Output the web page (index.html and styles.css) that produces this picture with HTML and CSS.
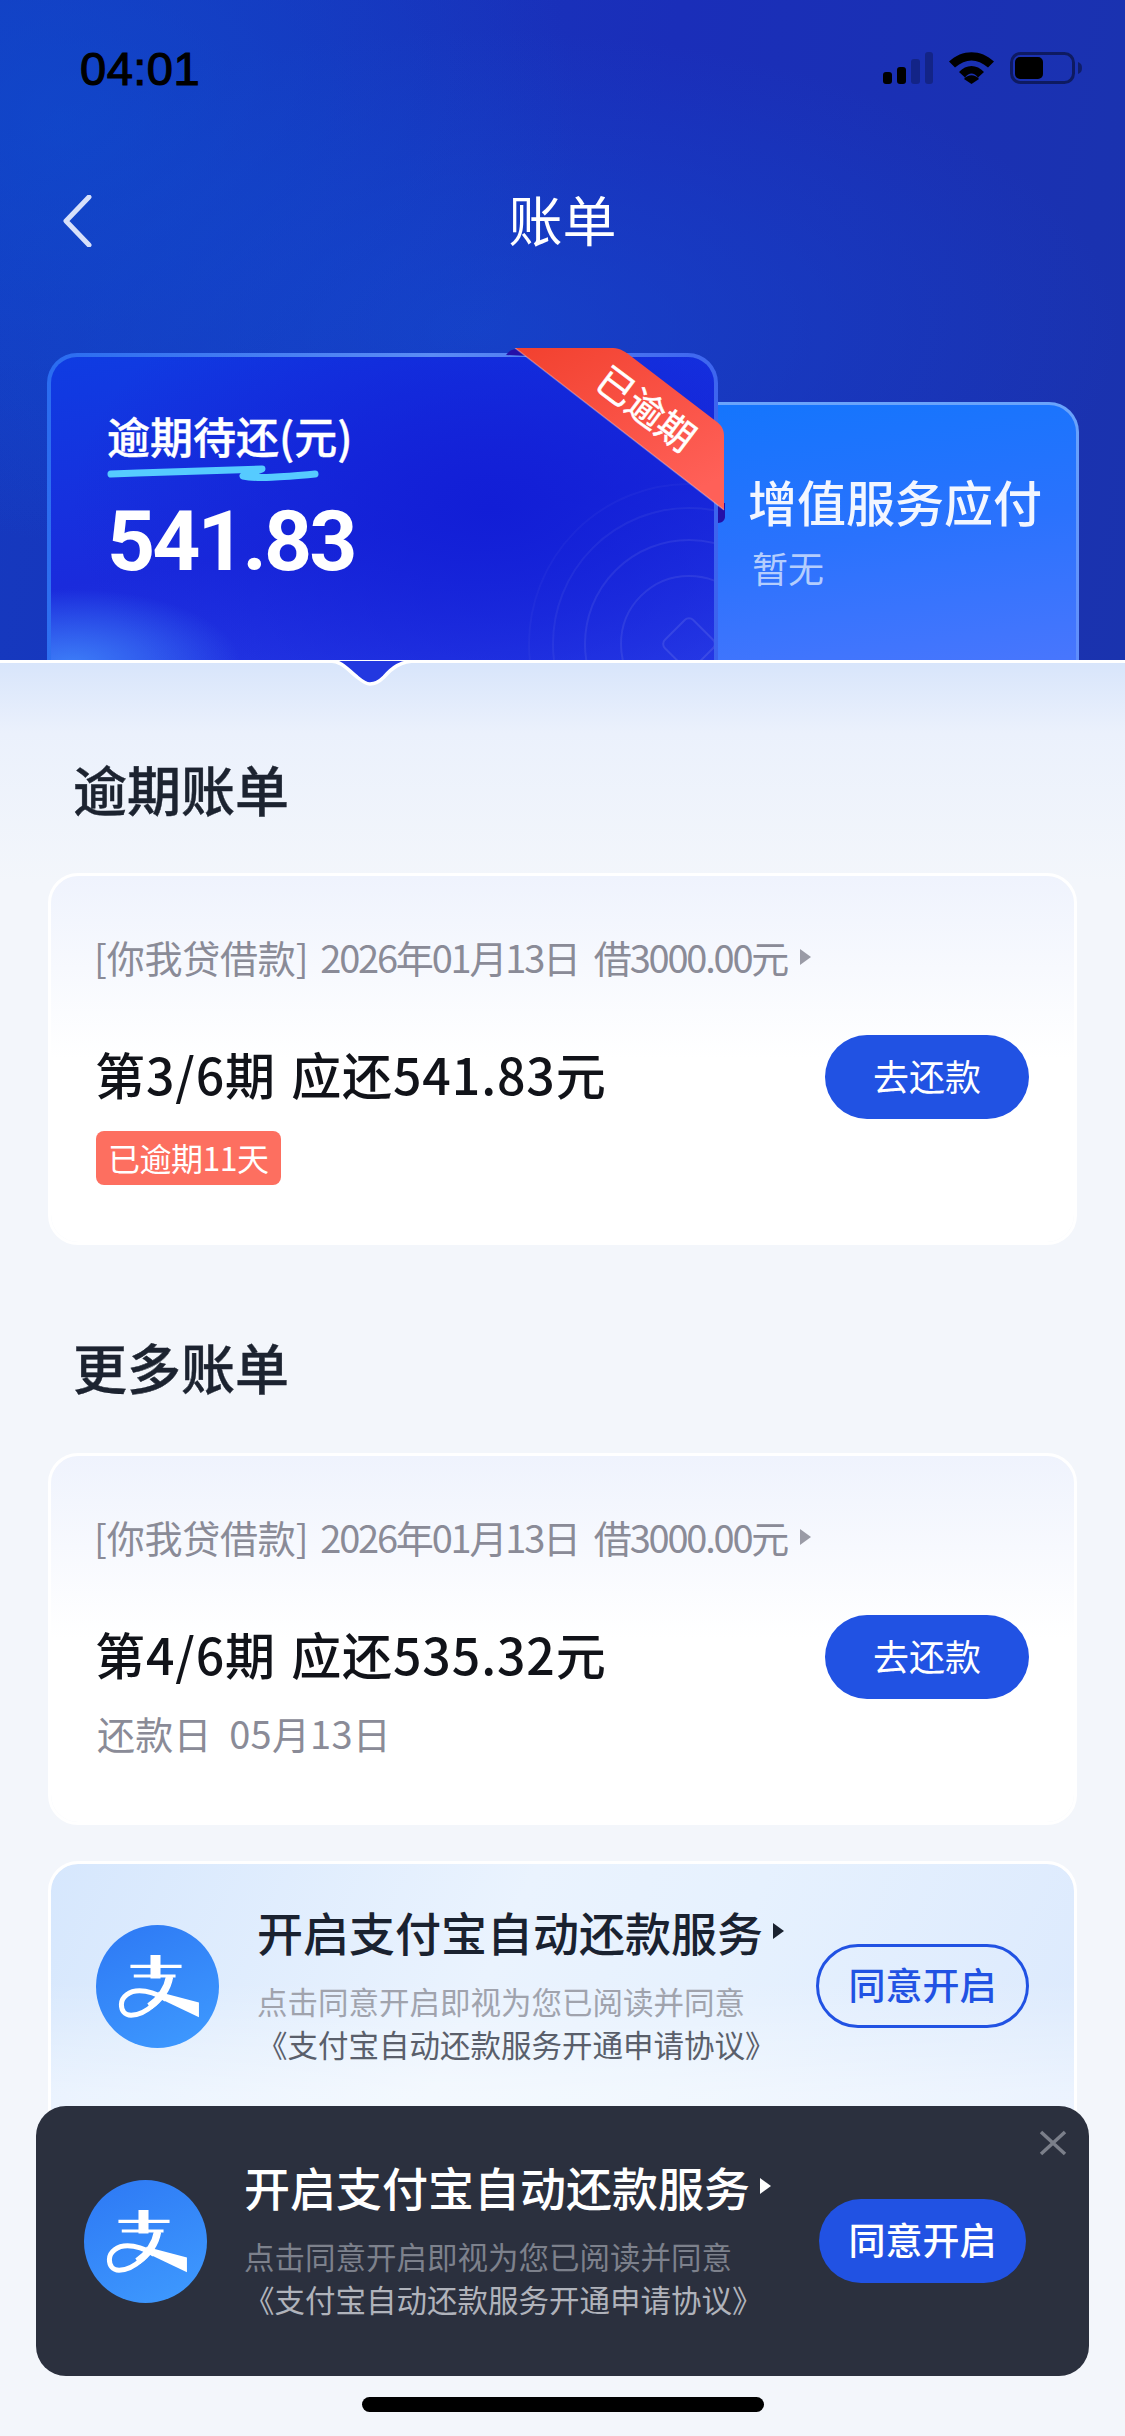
FILE: index.html
```html
<!DOCTYPE html>
<html lang="zh-CN">
<head>
  <meta charset="UTF-8" />
  <meta name="viewport" content="width=device-width, initial-scale=1" />
  <title>账单</title>
  <link rel="stylesheet" href="styles.css">
</head>
<body>

<svg class="defs" width="0" height="0" aria-hidden="true">
  <symbol id="alipay" viewBox="0 0 368 368">
    <path fill="#fff" d="M163 90h30v29h63v10h-63v19h45v9h-45v3h-30v-3h-50v-9h50v-19h-60v-10h60z"/>
    <path fill="none" stroke="#fff" stroke-width="15" d="M222 155C210 215 150 270 105 270C85 270 76 255 76 238C76 215 100 197 130 197C160 197 185 208 210 222"/>
    <path fill="none" stroke="#fff" stroke-width="22" d="M220 155C214 190 190 222 160 244"/>
    <path fill="#fff" d="M186 200L308 232V276L192 221z"/>
  </symbol>
</svg>

<header class="hero">
  <div class="status-bar">
    <span class="time">04:01</span>
    <div class="status-icons">
      <svg width="50" height="32" viewBox="0 0 50 32">
        <rect x="0" y="20" width="9" height="12" rx="3" fill="#000"/>
        <rect x="14" y="15" width="9" height="17" rx="3" fill="#000"/>
        <rect x="28" y="7" width="9" height="25" rx="3" fill="#000" opacity=".25"/>
        <rect x="42" y="0" width="8" height="32" rx="3" fill="#000" opacity=".25"/>
      </svg>
      <svg width="45" height="32" viewBox="0 0 45 32">
        <path d="M0 9.500C13-3 32-3 45 9.500l-6 6C28 6 17 6 6 15.500z" fill="#000"/>
        <path d="M10 20C17 12 28 12 35 20l-6 5.500C25 20 20 20 16 25.500z" fill="#000"/>
        <path d="M15 27C19 22 26 22 30 27l-7.500 5z" fill="#000"/>
      </svg>
      <svg width="72" height="32" viewBox="0 0 72 32">
        <rect x="1.500" y="1.500" width="62" height="29" rx="9" fill="none" stroke="#000" stroke-opacity=".45" stroke-width="3"/>
        <rect x="5" y="5" width="28" height="22" rx="5" fill="#000"/>
        <path d="M68 10c3 1 4 3 4 6s-1 5-4 6z" fill="#000" opacity=".4"/>
      </svg>
    </div>
  </div>

  <nav class="nav-bar">
    <svg class="back" width="30" height="52" viewBox="0 0 30 52">
      <path d="M27 2L4 26l23 24" fill="none" stroke="#d7e0fa" stroke-width="5" stroke-linecap="round" stroke-linejoin="round"/>
    </svg>
    <h1>账单</h1>
  </nav>

  <div class="hero-cards">
    <div class="due-card">
      <svg class="rings" width="330" height="200" viewBox="0 0 330 200">
        <g fill="none" stroke="#fff" stroke-opacity=".05" stroke-width="2">
          <circle cx="305" cy="184" r="68" stroke-opacity=".08"/>
          <circle cx="305" cy="184" r="104" stroke-opacity=".07"/>
          <circle cx="305" cy="184" r="136"/>
          <circle cx="305" cy="184" r="160" stroke-opacity=".03"/>
          <rect x="285" y="164" width="40" height="40" rx="6" transform="rotate(45 305 184)" stroke-opacity=".1"/>
        </g>
      </svg>
      <div class="due-label">逾期待还(元)</div>
      <svg class="squiggle" width="212" height="18" viewBox="0 0 212 18">
        <path d="M4 9C50 7 90 6 155 4L136 11C150 14 175 12 208 9" fill="none" stroke="#56cbff" stroke-width="7" stroke-linecap="round" stroke-linejoin="round"/>
      </svg>
      <div class="due-amount">541.83</div>
    </div>
    <div class="service-card">
      <div class="service-title">增值服务应付</div>
      <div class="service-sub">暂无</div>
    </div>
    <div class="ribbon">
      <svg width="222" height="176" viewBox="0 0 222 176">
        <defs>
          <linearGradient id="ribbonFill" x1="0" y1="0" x2="0.7" y2="1">
            <stop offset="0" stop-color="#f2412f"/>
            <stop offset="1" stop-color="#ff6058"/>
          </linearGradient>
        </defs>
        <path d="M0 7C3 3 6 1 11 1l12 7zM212 155l7 0v14c0 3-3 6-7 6z" fill="#2410a8"/>
        <path d="M9 0H107C114 0 120 4 126 9L211 74C216 78 218 82 218 88V162z" fill="url(#ribbonFill)"/>
        <path d="M9 0L218 162" stroke="#fff" stroke-opacity=".3" stroke-width="1.500"/>
      </svg>
      <span class="ribbon-text">已逾期</span>
    </div>
  </div>
</header>

<main class="content">
  <svg class="notch" width="91" height="30" viewBox="0 0 91 30">
    <path d="M4 1C16 1 22 10 31 17C37 22 40 24 44 24C49 24 53 22 58 17C66 8 74 1 91 1" fill="#2338e0" stroke="#fff" stroke-width="3.500"/>
  </svg>

  <h2 class="section-title">逾期账单</h2>
  <section class="bill-card">
    <div class="bill-meta">
      <span class="meta-loan">[你我贷借款]</span>
      <span class="meta-date">2026年01月13日</span>
      <span class="meta-amount">借3000.00元</span>
      <i class="arrow arrow-gray"></i>
    </div>
    <div class="bill-row">
      <div class="bill-title">第3/6期 应还541.83元</div>
      <button class="pay-btn">去还款</button>
    </div>
    <span class="overdue-tag">已逾期11天</span>
  </section>

  <h2 class="section-title section-more">更多账单</h2>
  <section class="bill-card">
    <div class="bill-meta">
      <span class="meta-loan">[你我贷借款]</span>
      <span class="meta-date">2026年01月13日</span>
      <span class="meta-amount">借3000.00元</span>
      <i class="arrow arrow-gray"></i>
    </div>
    <div class="bill-row">
      <div class="bill-title">第4/6期 应还535.32元</div>
      <button class="pay-btn">去还款</button>
    </div>
    <div class="bill-date">还款日 05月13日</div>
  </section>

  <section class="promo">
    <svg class="promo-logo"><use href="#alipay"/></svg>
    <div class="promo-text">
      <div class="promo-title">开启支付宝自动还款服务<i class="arrow"></i></div>
      <div class="promo-note">点击同意开启即视为您已阅读并同意</div>
      <div class="promo-link">《支付宝自动还款服务开通申请协议》</div>
    </div>
    <button class="promo-btn">同意开启</button>
  </section>
</main>

<section class="promo promo-float">
  <svg class="close" width="28" height="26" viewBox="0 0 28 26">
    <path d="M2 2l24 22M26 2L2 24" stroke="#7b7f8a" stroke-width="3.500" fill="none"/>
  </svg>
  <svg class="promo-logo"><use href="#alipay"/></svg>
  <div class="promo-text">
    <div class="promo-title">开启支付宝自动还款服务<i class="arrow"></i></div>
    <div class="promo-note">点击同意开启即视为您已阅读并同意</div>
    <div class="promo-link">《支付宝自动还款服务开通申请协议》</div>
  </div>
  <button class="promo-btn">同意开启</button>
</section>

<div class="home-bar"></div>

</body>
</html>
```

FILE: styles.css
```css
* {
  box-sizing: border-box;
}
html, body {
  margin: 0;
  padding: 0;
}
body {
  position: relative;
  width: 1125px;
  height: 2436px;
  overflow: hidden;
  background: #f3f6fb;
  font-family: "Noto Sans CJK SC", "Noto Sans", sans-serif;
  color: #111;
}
button {
  border: none;
  padding: 0 0 4px;
  font-family: inherit;
  cursor: pointer;
}
.defs {
  position: absolute;
}

/* Top blue area */
.hero {
  height: 660px;
  background:
    radial-gradient(520px 420px at 60px 120px, rgba(14, 78, 208, .6), transparent),
    radial-gradient(640px 300px at 480px 330px, rgba(20, 72, 206, .7), transparent),
    linear-gradient(100deg, #153abf, #1a2eb9 55%, #1a33ae);
}
.status-bar {
  height: 138px;
  padding: 0 43px 2px 80px;
  display: flex;
  align-items: center;
  justify-content: space-between;
}
.time {
  font-family: "Liberation Sans", sans-serif;
  font-size: 47px;
  font-weight: 400;
  letter-spacing: .5px;
  color: #000;
  -webkit-text-stroke: 1.2px #000;
}
.status-icons {
  display: flex;
  align-items: center;
  gap: 16px;
}
.nav-bar {
  position: relative;
  height: 166px;
  padding-bottom: 5px;
  display: flex;
  align-items: center;
  justify-content: center;
}
.nav-bar h1 {
  margin: 0;
  font-size: 54px;
  font-weight: 400;
  line-height: 60px;
  color: #fff;
}
.back {
  position: absolute;
  left: 62px;
  top: 57px;
}

.hero-cards {
  position: relative;
  margin-top: 49px;
  height: 307px;
  padding-left: 47px;
  display: flex;
  align-items: flex-end;
}
.due-card {
  position: relative;
  z-index: 1;
  width: 671px;
  height: 307px;
  padding: 53px 0 0 56px;
  border: 4px solid transparent;
  border-bottom: none;
  border-radius: 30px 30px 0 0;
  overflow: hidden;
  background:
    radial-gradient(170px 75px at 20px 307px, rgba(70, 150, 255, .75), transparent) padding-box,
    radial-gradient(420px 260px at 440px 150px, #121ed6, transparent) padding-box,
    linear-gradient(170deg, #0f3ce2, #1a2bdc 55%, #2a3ee8) padding-box,
    linear-gradient(95deg, #2a6cf0, #5b8cf5 55%, #3b62ee) border-box;
}
.rings {
  position: absolute;
  right: 0;
  bottom: 0;
}
.due-label {
  font-size: 43px;
  font-weight: 500;
  line-height: 50px;
  color: #fff;
  -webkit-text-stroke: .4px #fff;
}
.squiggle {
  display: block;
  margin-top: 5px;
}
.due-amount {
  margin-top: 12px;
  font-family: Roboto, sans-serif;
  font-size: 84px;
  font-weight: 700;
  line-height: 94px;
  letter-spacing: -3px;
  color: #fff;
}
.service-card {
  width: 364px;
  height: 258px;
  margin-left: -3px;
  padding: 66px 0 0 33px;
  border: 3px solid transparent;
  border-bottom: none;
  border-left: none;
  border-radius: 0 30px 0 0;
  background:
    linear-gradient(172deg, #1475fd, #2a72fd 50%, #4876fd) padding-box,
    linear-gradient(180deg, #6aa4fb, #5f8dfb) border-box;
}
.service-title {
  font-size: 49px;
  line-height: 60px;
  font-weight: 500;
  color: #f2f6ff;
}
.service-sub {
  margin-top: 14px;
  padding-left: 4px;
  font-size: 36px;
  line-height: 44px;
  color: #b4cdfd;
}
.ribbon {
  position: absolute;
  z-index: 2;
  left: 506px;
  top: -5px;
  width: 222px;
  height: 176px;
}
.ribbon svg {
  display: block;
}
.ribbon-text {
  position: absolute;
  left: 85px;
  top: 37px;
  font-size: 37.500px;
  font-weight: 400;
  line-height: 44px;
  color: #fff;
  white-space: nowrap;
  transform: rotate(37deg);
  -webkit-text-stroke: .5px #fff;
}

/* Bills */
.content {
  position: relative;
  height: 1776px;
  padding: 96px 48px 0;
  border-top: 3px solid #fff;
  background: linear-gradient(#d8e5fb, #ebf1fc 70px, #f3f6fb 220px);
}
.notch {
  position: absolute;
  z-index: 2;
  left: 326px;
  top: -3px;
}
.section-title {
  margin: 0 0 54px 25px;
  font-size: 54px;
  font-weight: 500;
  line-height: 60px;
  color: #1c2330;
  -webkit-text-stroke: .4px #1c2330;
}
.section-more {
  margin-top: 92px;
  margin-bottom: 56px;
}
.bill-card {
  height: 372px;
  padding: 60px 45px 0 44px;
  border: 3px solid #fff;
  border-radius: 30px;
  background: linear-gradient(#eff3fd, #fff 50%) padding-box;
}
.bill-meta {
  display: flex;
  align-items: center;
  font-size: 38px;
  line-height: 42px;
  color: #8a8b97;
  white-space: nowrap;
}
.meta-loan {
  margin-left: -1px;
  letter-spacing: -.2px;
}
.meta-date {
  margin-left: 12px;
  letter-spacing: -2.200px;
}
.meta-amount {
  margin-left: 15px;
  letter-spacing: -2.200px;
}
.arrow {
  display: inline-block;
  margin-left: 13px;
  border-left: 11px solid currentColor;
  border-top: 8px solid transparent;
  border-bottom: 8px solid transparent;
}
.arrow-gray {
  color: #9a9ba6;
}
.bill-row {
  display: flex;
  align-items: center;
  justify-content: space-between;
  height: 84px;
  margin-top: 57px;
}
.bill-title {
  margin-top: -8px;
  font-size: 50px;
  font-weight: 500;
  line-height: 60px;
  letter-spacing: .9px;
  word-spacing: 3px;
  color: #111319;
}
.pay-btn {
  width: 204px;
  height: 84px;
  border-radius: 42px;
  background: #2152e3;
  font-size: 36px;
  color: #fff;
}
.overdue-tag {
  display: inline-block;
  margin: 12px 0 0 1px;
  padding: 0 12px;
  height: 54px;
  border-radius: 8px;
  background: #fd6f60;
  font-size: 32px;
  line-height: 52px;
  letter-spacing: -.5px;
  color: #fff;
}
.bill-date {
  margin: 7px 0 0 2px;
  font-size: 38px;
  line-height: 54px;
  letter-spacing: .2px;
  word-spacing: 9px;
  color: #8a8b97;
}

/* Auto-repay promo */
.promo {
  height: 300px;
  margin-top: 36px;
  padding: 61px 45px 0;
  border: 3px solid #fff;
  border-radius: 30px;
  display: flex;
  align-items: flex-start;
  background:
    linear-gradient(rgba(255, 255, 255, 0) 40%, rgba(255, 255, 255, .45) 78%) padding-box,
    linear-gradient(115deg, #d6e7fd, #eaf3fe 42%, #e6f1fe 62%, #dbe9fd) padding-box;
}
.promo-logo {
  flex: none;
  width: 123px;
  height: 123px;
  border-radius: 50%;
  background: linear-gradient(155deg, #2d78f4, #3f9bff);
}
.promo-text {
  flex: 1;
  margin: -25px 0 0 38px;
}
.promo-title {
  display: flex;
  align-items: center;
  font-size: 46px;
  font-weight: 500;
  line-height: 62px;
  color: #1a2230;
}
.promo-title .arrow {
  margin-left: 10px;
}
.promo-note, .promo-link {
  font-size: 30.500px;
  line-height: 43px;
  color: #a0a3ad;
  white-space: nowrap;
}
.promo-note {
  margin-top: 18px;
}
.promo-link {
  color: #5a5f6b;
}
.promo-btn {
  flex: none;
  width: 213px;
  height: 84px;
  margin-top: 19px;
  border: 3px solid #2152e3;
  border-radius: 42px;
  background: transparent;
  font-size: 37px;
  font-weight: 500;
  color: #2152e3;
}

.promo-float {
  position: absolute;
  z-index: 3;
  left: 36px;
  top: 2106px;
  width: 1053px;
  height: 270px;
  margin: 0;
  padding: 74px 48px 0;
  border: none;
  background: #2b303e;
}
.promo-float .promo-text {
  margin-left: 37px;
}
.promo-float .promo-title {
  color: #fff;
}
.promo-float .promo-note {
  color: #7d818c;
}
.promo-float .promo-link {
  color: #b0b3bb;
}
.promo-float .promo-btn {
  width: 207px;
  border: none;
  background: #2152e3;
  color: #fff;
  margin-right: 15px;
}
.close {
  position: absolute;
  right: 22px;
  top: 24px;
}

.home-bar {
  position: absolute;
  z-index: 3;
  left: 362px;
  top: 2397px;
  width: 402px;
  height: 15px;
  border-radius: 8px;
  background: #000;
}
```
